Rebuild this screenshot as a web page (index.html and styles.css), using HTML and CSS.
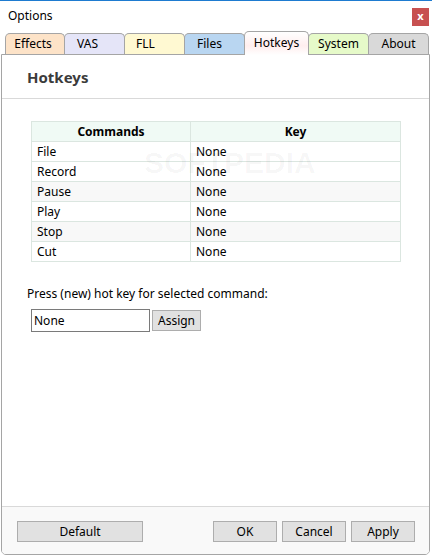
FILE: index.html
```html
<!DOCTYPE html>
<html>
<head>
<meta charset="utf-8">
<link rel="stylesheet" href="styles.css">
</head>
<body>
<div class="window">
  <div class="titlebar">
    <span class="title">Options</span>
    <span class="close">x</span>
  </div>
  <div class="tabs">
    <div class="tab tab-effects">Effects</div>
    <div class="tab tab-vas">VAS</div>
    <div class="tab tab-fll">FLL</div>
    <div class="tab tab-files">Files</div>
    <div class="tab tab-hotkeys active">Hotkeys</div>
    <div class="tab tab-system">System</div>
    <div class="tab tab-about">About</div>
  </div>
  <div class="panel">
    <div class="panel-header">Hotkeys</div>
    <div class="panel-body">
      <div class="table">
        <div class="row head"><div class="cell">Commands</div><div class="cell">Key</div></div>
        <div class="row"><div class="cell">File</div><div class="cell">None</div></div>
        <div class="row"><div class="cell">Record</div><div class="cell">None</div></div>
        <div class="row alt"><div class="cell">Pause</div><div class="cell">None</div></div>
        <div class="row"><div class="cell">Play</div><div class="cell">None</div></div>
        <div class="row alt"><div class="cell">Stop</div><div class="cell">None</div></div>
        <div class="row"><div class="cell">Cut</div><div class="cell">None</div></div>
        <div class="watermark">SOFTPEDIA</div>
      </div>
      <div class="prompt">Press (new) hot key for selected command:</div>
      <div class="assign-row">
        <div class="input">None</div>
        <div class="btn btn-assign">Assign</div>
      </div>
    </div>
    <div class="panel-footer">
      <div class="btn btn-default">Default</div>
      <div class="footer-right">
        <div class="btn btn-ok">OK</div>
        <div class="btn btn-cancel">Cancel</div>
        <div class="btn btn-apply">Apply</div>
      </div>
    </div>
  </div>
</div>
</body>
</html>
```
FILE: styles.css
```css
html, body {
  margin: 0;
  padding: 0;
  background: #ffffff;
}
.window {
  width: 432px;
  height: 556px;
  box-sizing: border-box;
  border-top: 1px solid #1e7bd0;
  display: flex;
  flex-direction: column;
  background: #ffffff;
  font-family: "Noto Sans", "DejaVu Sans", sans-serif;
  font-size: 12px;
  color: #000;
}
.titlebar {
  height: 30px;
  display: flex;
  align-items: center;
  justify-content: space-between;
  padding: 0 3px 0 8px;
  flex: none;
}
.title {
  font-size: 12px;
  color: #000;
  margin-top: -1px;
}
.close {
  width: 17px;
  height: 18px;
  background: #c75050;
  color: #fff;
  font-weight: bold;
  font-size: 11px;
  line-height: 16px;
  text-align: center;
  margin-top: 1px;
}
.tabs {
  height: 23px;
  display: flex;
  align-items: flex-end;
  padding-left: 5px;
  flex: none;
  position: relative;
  z-index: 2;
}
.tab {
  height: 21px;
  box-sizing: border-box;
  border: 1px solid #a5a5a5;
  border-bottom: none;
  border-radius: 5px 5px 0 0;
  width: 61px;
  margin-left: -1px;
  text-align: center;
  line-height: 20px;
  font-size: 12px;
  color: #000;
}
.tab-effects { width: 60px; margin-left: 0; background: #fde3c8; padding-right: 4px; }
.tab-vas { background: #e5e5f8; padding-right: 14px; }
.tab-fll { background: #fff9d2; padding-right: 18px; }
.tab-files { background: #b9d6f1; padding-right: 10px; }
.tab-hotkeys {
  width: 65px;
  height: 24px;
  margin-bottom: -1px;
  background: linear-gradient(#ffffff, #ffeeee 60%, #ffffff);
  line-height: 22px;
}
.tab-system { background: #e6fac9; }
.tab-about { background: #d9d9d9; }

.panel {
  flex: 1;
  margin: 0 2px 1px 1px;
  border: 1px solid #a5a5a5;
  border-radius: 0 0 5px 5px;
  display: flex;
  flex-direction: column;
  overflow: hidden;
}
.panel-header {
  height: 43px;
  border-bottom: 1px solid #d9d9d9;
  padding-left: 25px;
  display: flex;
  align-items: center;
  font-weight: bold;
  font-size: 15px;
  color: #3b3b3b;
  flex: none;
}
.panel-body {
  flex: 1;
  padding: 22px 0 0 29px;
}
.table {
  width: 370px;
  border: 1px solid #dbe6e0;
  box-sizing: border-box;
  position: relative;
}
.row {
  display: grid;
  grid-template-columns: 158px 1fr;
  height: 20px;
  border-top: 1px solid #dbe6e0;
  box-sizing: border-box;
}
.row:first-child { border-top: none; height: 19px; }
.row.alt { background: #f8f8f8; }
.row.head {
  background: #f0faf5;
  font-weight: bold;
  text-align: center;
}
.cell {
  padding-left: 5px;
  line-height: 19px;
  font-size: 12px;
  white-space: nowrap;
}
.cell + .cell { border-left: 1px solid #dbe6e0; }
.row.head .cell { padding-left: 0; line-height: 19px; }
.watermark {
  position: absolute;
  left: 112px;
  top: 24px;
  font-size: 30px;
  font-weight: bold;
  letter-spacing: 0;
  color: rgba(0, 0, 0, 0.035);
  pointer-events: none;
  font-family: "Liberation Sans", sans-serif;
}
.prompt {
  margin-top: 24px;
  margin-left: -4px;
  font-size: 12px;
  height: 16px;
  line-height: 16px;
}
.assign-row {
  display: flex;
  align-items: center;
  margin-top: 7px;
  gap: 2px;
}
.input {
  width: 119px;
  height: 23px;
  box-sizing: border-box;
  border: 1px solid #7a7a7a;
  padding-left: 2px;
  line-height: 21px;
  font-size: 12px;
}
.btn {
  height: 21px;
  box-sizing: border-box;
  border: 1px solid #adadad;
  background: #e1e1e1;
  text-align: center;
  line-height: 19px;
  font-size: 12px;
}
.btn-assign { width: 49px; }
.panel-footer {
  flex: none;
  height: 48px;
  border-top: 1px solid #d9d9d9;
  background: #f9f9f9;
  display: flex;
  align-items: center;
  justify-content: space-between;
  padding: 1px 14px 0 15px;
  box-sizing: border-box;
}
.footer-right {
  display: flex;
  gap: 5px;
}
.btn-default { width: 126px; }
.btn-ok, .btn-cancel, .btn-apply { width: 64px; }
```
